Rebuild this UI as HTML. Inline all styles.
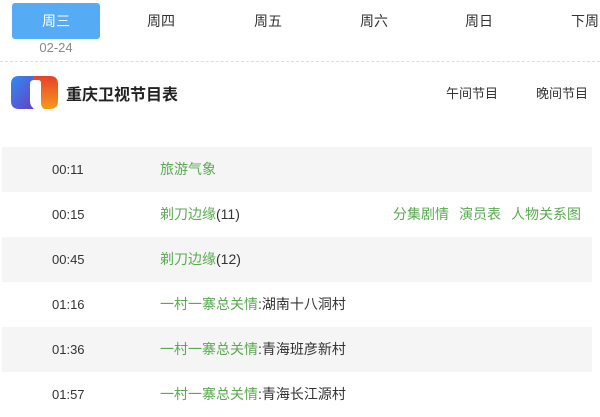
<!DOCTYPE html>
<html><head><meta charset="utf-8"><style>
*{margin:0;padding:0;box-sizing:border-box}
body{width:600px;height:400px;overflow:hidden;background:#fff;font-family:"Liberation Sans","Noto Sans CJK SC",sans-serif;color:#333;position:relative}
.tab{position:absolute;top:3px;height:36px;line-height:36px;font-size:14px;text-align:center;width:88px;color:#333}
.act{background:#55acf5;color:#fff;border-radius:3px}
.date{position:absolute;left:12px;top:40px;width:88px;text-align:center;font-size:13px;color:#888}
.dash{position:absolute;left:0;top:61px;width:600px;border-top:1px dashed #ddd}
.title{position:absolute;left:66px;top:81px;font-size:16px;font-weight:bold;color:#222}
.nav{position:absolute;top:83px;font-size:13px;color:#333}
.row{position:absolute;left:2px;width:590px;height:45px;line-height:45px;font-size:14px}
.g{background:#f5f5f5}
.t{position:absolute;left:50px;font-size:13px}
.n{position:absolute;left:158px;color:#333}
.gr{color:#5aaa50}
.ex{position:absolute;right:11px;color:#5aaa50}
.ex span{margin-left:10px}
</style></head><body>
<div class="tab act" style="left:12px">周三</div>
<div class="tab" style="left:117px">周四</div>
<div class="tab" style="left:224px">周五</div>
<div class="tab" style="left:330px">周六</div>
<div class="tab" style="left:435px">周日</div>
<div class="tab" style="left:542px;text-align:left;padding-left:29px">下周</div>
<div class="date">02-24</div>
<div class="dash"></div>
<svg style="position:absolute;left:11px;top:76px" width="47" height="33" viewBox="0 0 47 33">
<defs><linearGradient id="a" x1="0" y1="0" x2="1" y2="1"><stop offset="0" stop-color="#2f8cf0"/><stop offset="1" stop-color="#6a3bc4"/></linearGradient>
<linearGradient id="b" x1="0" y1="0" x2="0" y2="1"><stop offset="0" stop-color="#e8402a"/><stop offset="1" stop-color="#f59a1c"/></linearGradient></defs>
<path d="M8 0H26V33H8Q0 33 0 25V8Q0 0 8 0Z" fill="url(#a)"/>
<path d="M22 0H39Q47 0 47 8V25Q47 33 39 33H22Z" fill="url(#b)"/>
<path d="M23 4H27Q30 4 30 7V27Q30 31 33 33H24Q19 31 19 25V8Q19 4 23 4Z" fill="#fff"/>
</svg>
<div class="title">重庆卫视节目表</div>
<div class="nav" style="left:446px">午间节目</div>
<div class="nav" style="left:536px">晚间节目</div>
<div class="row g" style="top:147px"><span class="t">00:11</span><span class="n gr">旅游气象</span></div>
<div class="row" style="top:192px"><span class="t">00:15</span><span class="n"><span class="gr">剃刀边缘</span>(11)</span><span class="ex"><span>分集剧情</span><span>演员表</span><span>人物关系图</span></span></div>
<div class="row g" style="top:237px"><span class="t">00:45</span><span class="n"><span class="gr">剃刀边缘</span>(12)</span></div>
<div class="row" style="top:282px"><span class="t">01:16</span><span class="n"><span class="gr">一村一寨总关情</span>:湖南十八洞村</span></div>
<div class="row g" style="top:327px"><span class="t">01:36</span><span class="n"><span class="gr">一村一寨总关情</span>:青海班彦新村</span></div>
<div class="row" style="top:372px"><span class="t">01:57</span><span class="n"><span class="gr">一村一寨总关情</span>:青海长江源村</span></div>
</body></html>
